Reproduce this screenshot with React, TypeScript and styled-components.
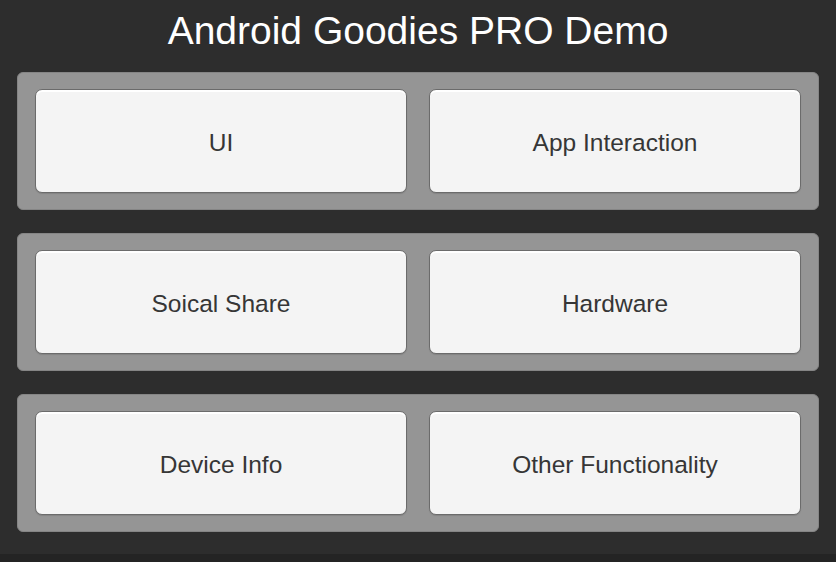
import { createGlobalStyle } from 'styled-components'
import styled from 'styled-components'

const GlobalStyle = createGlobalStyle`
  html, body {
    margin: 0;
    padding: 0;
    background: #2d2d2d;
  }
  body {
    font-family: "Liberation Sans", Arial, sans-serif;
  }
`

const Screen = styled.div`
  width: 836px;
  height: 562px;
  display: flex;
  flex-direction: column;
  background: #2d2d2d;
  overflow: hidden;
`

const Title = styled.h1`
  margin: 0;
  height: 72px;
  display: flex;
  align-items: center;
  justify-content: center;
  padding-bottom: 10px;
  box-sizing: border-box;
  font-size: 39px;
  font-weight: 400;
  color: #ffffff;
`

const Menu = styled.div`
  display: flex;
  flex-direction: column;
  gap: 23px;
  padding: 0 17px;
`

const Panel = styled.div`
  height: 138px;
  box-sizing: border-box;
  display: grid;
  grid-template-columns: 1fr 1fr;
  gap: 22px;
  padding: 16px 17px;
  background: #959595;
  border: 1px solid #858585;
  border-radius: 6px;
`

const MenuButton = styled.button`
  margin: 0;
  height: 104px;
  box-sizing: border-box;
  padding: 3px 0 0;
  display: flex;
  align-items: center;
  justify-content: center;
  background: #f4f4f4;
  border: 1px solid #6b6b6b;
  border-radius: 7px;
  box-shadow: inset 0 2px 0 #ffffff, 0 1px 1px rgba(0, 0, 0, 0.12);
  font-family: "Liberation Sans", Arial, sans-serif;
  font-size: 24.5px;
  color: #363636;
  cursor: pointer;
`

const Footer = styled.div`
  margin-top: auto;
  height: 8px;
  background: #242424;
`

const rows = [
  ['UI', 'App Interaction'],
  ['Soical Share', 'Hardware'],
  ['Device Info', 'Other Functionality'],
]

export default function App() {
  return (
    <>
      <GlobalStyle />
      <Screen>
        <Title>Android Goodies PRO Demo</Title>
        <Menu>
          {rows.map((row) => (
            <Panel key={row[0]}>
              {row.map((label) => (
                <MenuButton key={label}>{label}</MenuButton>
              ))}
            </Panel>
          ))}
        </Menu>
        <Footer />
      </Screen>
    </>
  )
}
